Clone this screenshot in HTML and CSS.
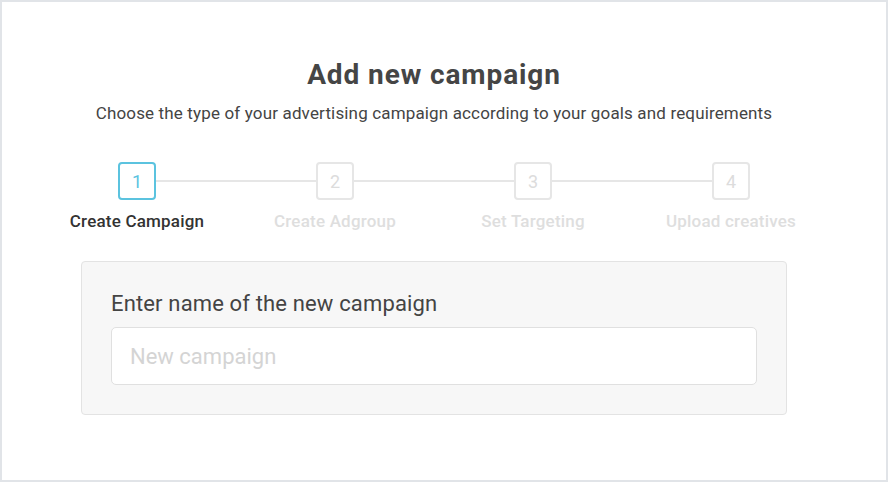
FILE: index.html
```html
<!DOCTYPE html>
<html>
<head>
<meta charset="utf-8">
<link rel="stylesheet" href="styles.css">
</head>
<body>
<div class="frame">
  <div class="content">
    <h1 class="title">Add new campaign</h1>
    <p class="subtitle">Choose the type of your advertising campaign according to your goals and requirements</p>
    <div class="steps">
      <div class="step active"><div class="num">1</div><div class="label">Create Campaign</div></div>
      <div class="step"><div class="num">2</div><div class="label">Create Adgroup</div></div>
      <div class="step"><div class="num">3</div><div class="label">Set Targeting</div></div>
      <div class="step last"><div class="num">4</div><div class="label">Upload creatives</div></div>
    </div>
    <div class="card">
      <label class="field-label" for="name">Enter name of the new campaign</label>
      <input class="field" id="name" type="text" placeholder="New campaign">
    </div>
  </div>
</div>
</body>
</html>
```
FILE: styles.css
```css
html, body {
  margin: 0;
  padding: 0;
  background: #ffffff;
}
.frame {
  width: 888px;
  height: 482px;
  box-sizing: border-box;
  border: 2px solid #e1e4e8;
  background: #ffffff;
  font-family: Roboto, "Liberation Sans", sans-serif;
  color: #444444;
  overflow: hidden;
}
.content {
  width: 706px;
  margin-left: 79px;
  padding-top: 58px;
  display: flex;
  flex-direction: column;
  align-items: center;
}
.title {
  margin: 0;
  font-size: 28px;
  line-height: 30px;
  font-weight: 700;
  letter-spacing: 0.9px;
  color: #454545;
}
.subtitle {
  margin: 13px 0 0;
  font-size: 17px;
  line-height: 20px;
  letter-spacing: 0.15px;
  color: #444444;
  white-space: nowrap;
}
.steps {
  margin-top: 39px;
  width: 792px;
  display: flex;
  flex-shrink: 0;
}
.step {
  width: 198px;
  display: flex;
  flex-direction: column;
  align-items: center;
  position: relative;
}
.step::after {
  content: "";
  position: absolute;
  top: 18px;
  left: calc(50% + 19px);
  width: calc(100% - 38px);
  height: 2px;
  background: #e6e6e6;
}
.step.last::after {
  display: none;
}
.num {
  width: 38px;
  height: 38px;
  box-sizing: border-box;
  border: 2px solid #e6e6e6;
  border-radius: 4px;
  display: flex;
  align-items: center;
  justify-content: center;
  font-size: 18px;
  color: #dcdcdc;
  background: #ffffff;
}
.label {
  margin-top: 11px;
  font-size: 17px;
  line-height: 20px;
  letter-spacing: 0.2px;
  font-weight: 500;
  color: #dedede;
  white-space: nowrap;
}
.step.active .num {
  border-color: #5bc3df;
  color: #5bc3df;
}
.step.active .label {
  color: #333333;
}
.card {
  margin-top: 30px;
  width: 706px;
  box-sizing: border-box;
  background: #f7f7f7;
  border: 1px solid #e3e3e3;
  border-radius: 4px;
  padding: 29px 29px 29px;
  display: flex;
  flex-direction: column;
}
.field-label {
  font-size: 22px;
  line-height: 26px;
  letter-spacing: 0.15px;
  color: #444444;
}
.field {
  margin-top: 10px;
  height: 58px;
  box-sizing: border-box;
  border: 1px solid #e0e0e0;
  border-radius: 5px;
  background: #ffffff;
  padding: 0 18px;
  font-family: Roboto, "Liberation Sans", sans-serif;
  font-size: 22px;
  color: #444444;
  outline: none;
}
.field::placeholder {
  color: #d4d4d4;
}
```
